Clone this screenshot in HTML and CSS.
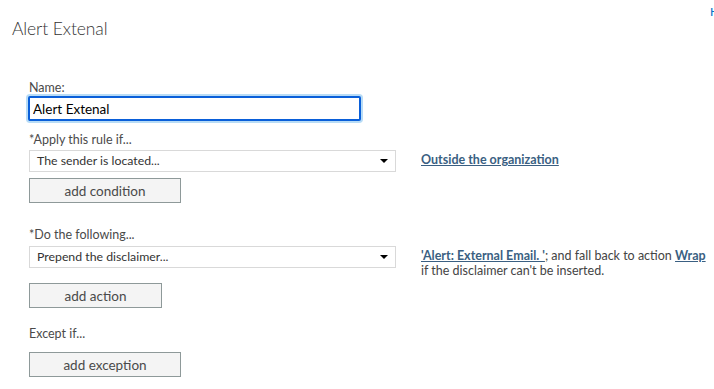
FILE: index.html
```html
<!DOCTYPE html>
<html lang="en">
<head>
  <meta charset="UTF-8" />
  <meta name="viewport" content="width=device-width, initial-scale=1.0" />
  <title>Alert Extenal</title>
  <link rel="stylesheet" href="styles.css">
</head>
<body>
  <a class="help-link" href="#">Help</a>
  <h1 class="rule-title">Alert Extenal</h1>

  <form class="rule-form">
    <label class="field-label" for="rule-name">Name:</label>
    <input class="name-input" id="rule-name" type="text" value="Alert Extenal" />

    <div class="field-label label-apply">*Apply this rule if...</div>
    <div class="rule-row">
      <div class="fake-select">The sender is located...</div>
      <div class="rule-desc"><a href="#" class="desc-link">Outside the organization</a></div>
    </div>
    <button type="button" class="rule-btn btn-condition">add condition</button>

    <div class="field-label label-do">*Do the following...</div>
    <div class="rule-row">
      <div class="fake-select">Prepend the disclaimer...</div>
      <div class="rule-desc">
        <a href="#" class="desc-link">'Alert: External Email. '</a>; and fall back to action <a href="#" class="desc-link">Wrap</a><br>
        if the disclaimer can't be inserted.
      </div>
    </div>
    <button type="button" class="rule-btn btn-action">add action</button>

    <div class="field-label label-except">Except if...</div>
    <button type="button" class="rule-btn btn-exception">add exception</button>
  </form>
</body>
</html>
```

FILE: styles.css
```css
body {
  margin: 0;
  padding: 0;
  font-family: "Segoe UI", Lato, "Open Sans", Arial, sans-serif;
  color: #333;
  background: #fff;
  overflow: hidden;
  position: relative;
  width: 714px;
  height: 389px;
}

.help-link {
  position: absolute;
  left: 710px;
  top: 4px;
  font-size: 12px;
  color: #0072c6;
  text-decoration: none;
}

.rule-title {
  margin: 17px 0 0 12px;
  font-size: 17.5px;
  line-height: 24px;
  font-weight: 300;
  letter-spacing: -0.1px;
  color: #333;
}

.rule-form {
  padding-left: 29px;
  margin-top: 39px;
}

.field-label {
  display: block;
  font-size: 12.5px;
  line-height: 16px;
  color: #4a4a4a;
}

.name-input {
  display: block;
  box-sizing: border-box;
  width: 333px;
  height: 25px;
  margin: 0 0 0 -1px;
  padding: 0 3px;
  border: 2px solid #0a5fd9;
  border-radius: 2px;
  box-shadow: 0 0 0 2px #b8dcf6;
  outline: none;
  font-family: inherit;
  font-size: 13.5px;
  color: #000;
}

.label-apply {
  margin-top: 11px;
  margin-bottom: 2px;
}

.label-do {
  margin-top: 24px;
  margin-bottom: 3px;
}

.label-except {
  margin-top: 18px;
  margin-bottom: 10px;
}

.rule-row {
  display: flex;
  align-items: flex-start;
}

.fake-select {
  position: relative;
  box-sizing: border-box;
  width: 367px;
  height: 22px;
  padding: 0 0 0 7px;
  border: 1px solid #d9d9d9;
  font-size: 12.3px;
  line-height: 20px;
  color: #333;
  flex-shrink: 0;
}

.fake-select::after {
  content: "";
  position: absolute;
  right: 7px;
  top: 8px;
  border-left: 4px solid transparent;
  border-right: 4px solid transparent;
  border-top: 4px solid #000;
}

.rule-desc {
  margin-left: 25px;
  font-size: 12.5px;
  line-height: 15px;
  color: #444;
  padding-top: 2px;
  white-space: nowrap;
}

.desc-link {
  font-weight: bold;
  color: #3a5f82;
  text-decoration: underline;
}

.rule-btn {
  display: block;
  box-sizing: border-box;
  height: 25px;
  padding: 0;
  border: 1px solid #8e9999;
  background: #f4f4f4;
  font-family: inherit;
  font-size: 13.5px;
  color: #4a4a4a;
  cursor: pointer;
}

.btn-condition {
  width: 152px;
  margin-top: 6px;
}

.btn-action {
  width: 133px;
  margin-top: 5px;
}

.btn-exception {
  width: 152px;
}
```
